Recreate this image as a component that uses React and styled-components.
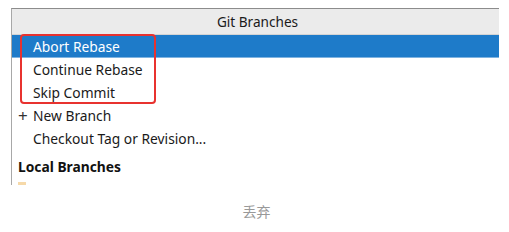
import React from "react";
import styled, { createGlobalStyle } from "styled-components";

const Global = createGlobalStyle`
  html, body { margin: 0; padding: 0; background: #fff; }
  body { font-family: "Noto Sans", "Open Sans", sans-serif; }
`;

const Page = styled.div`
  width: 509px;
  height: 232px;
  position: relative;
  overflow: hidden;
  background: #fff;
`;

const Panel = styled.div`
  position: relative;
  margin: 8px 0 0 11px;
  width: 488px;
  height: 177px;
  border-top: 1px solid #8c8c8c;
  border-left: 1px solid #a8a8a8;
  box-sizing: border-box;
  overflow: hidden;
`;

const Header = styled.div`
  height: 26px;
  background: #ebebeb;
  border-bottom: 1px solid #d4d4d4;
  box-sizing: border-box;
  display: flex;
  align-items: center;
  justify-content: center;
  font-size: 13.6px;
  color: #1a1a1a;
  padding-left: 4px;
`;

const Row = styled.div`
  height: 23px;
  display: flex;
  align-items: center;
  padding-left: ${(p) => (p.$plus ? "6px" : "21px")};
  font-size: 13.8px;
  color: ${(p) => (p.$selected ? "#fff" : "#1a1a1a")};
  background: ${(p) => (p.$selected ? "#1e7bc9" : "transparent")};
  border-bottom: ${(p) => (p.$selected ? "1px solid #7fb3e0" : "none")};
  box-sizing: border-box;
`;

const Plus = styled.span`
  width: 15px;
  font-size: 17px;
  line-height: 1;
  color: #333;
`;

const Section = styled.div`
  height: 30px;
  display: flex;
  align-items: flex-end;
  padding: 0 0 4px 6px;
  box-sizing: border-box;
  font-weight: 700;
  font-size: 13.8px;
  color: #111;
`;

const Mark = styled.div`
  margin: 2px 0 0 6px;
  width: 8px;
  height: 4px;
  background: #f0c070;
  opacity: 0.6;
`;

const Highlight = styled.div`
  position: absolute;
  left: 8px;
  top: 25px;
  width: 136px;
  height: 70px;
  border: 2px solid #e8322f;
  border-radius: 4px;
  box-sizing: border-box;
`;

const Caption = styled.div`
  text-align: center;
  margin-top: 16px;
  font-family: "Noto Sans CJK SC", sans-serif;
  font-size: 14px;
  color: #999;
  padding-left: 4px;
`;

export default function App() {
  return (
    <Page>
      <Global />
      <Panel>
        <Header>Git Branches</Header>
        <Row $selected>Abort Rebase</Row>
        <Row>Continue Rebase</Row>
        <Row>Skip Commit</Row>
        <Row $plus>
          <Plus>+</Plus>New Branch
        </Row>
        <Row>Checkout Tag or Revision...</Row>
        <Section>Local Branches</Section>
        <Mark />
        <Highlight />
      </Panel>
      <Caption>丢弃</Caption>
    </Page>
  );
}
